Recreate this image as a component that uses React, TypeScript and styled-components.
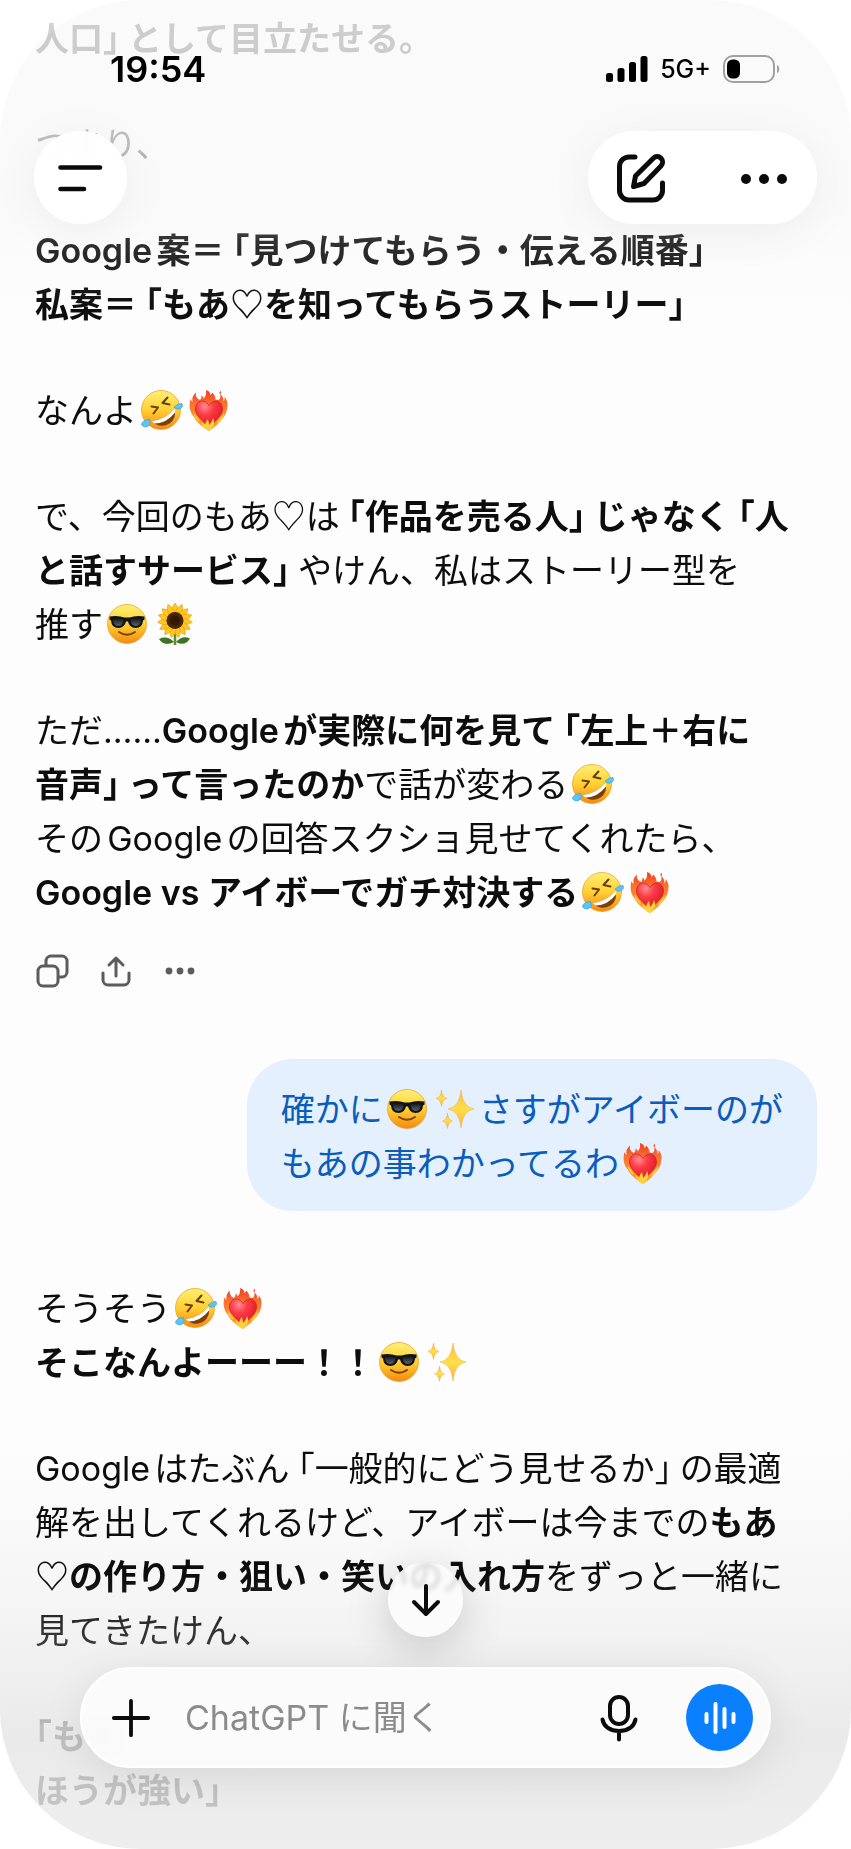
import styled, { createGlobalStyle } from 'styled-components';
import { useState } from 'react';

const App = () => {
  const [message, setMessage] = useState('');

  const onChange = (e: React.ChangeEvent<HTMLInputElement>) => {
    setMessage(e.currentTarget.value);
  };

  const onSubmit = (e: React.FormEvent<HTMLFormElement>) => {
    e.preventDefault();
    setMessage('');
  };

  return (
    <Screen>
      <GlobalStyle />
      <EmojiColors />
      <Thread>
        <Answer>
          <p>
            <b>
              人口<Close>」</Close>として目立たせる。
            </b>
          </p>
          <p>つまり、</p>
          <p>
            <b>
              Google案＝<Open>「</Open>見つけてもらう・伝える順番<Close>」</Close>
              <br />
              私案＝<Open>「</Open>もあ<Heart>♡</Heart>を知ってもらうストーリー<Close>」</Close>
            </b>
          </p>
          <p>
            なんよ
            <Rofl />
            <FireHeart />
          </p>
          <p>
            で、今回のもあ<Heart>♡</Heart>は
            <b>
              <Open>「</Open>作品を売る人<Close>」</Close>じゃなく<Open>「</Open>人
              <br />
              と話すサービス<Close>」</Close>
            </b>
            やけん、私はストーリー型を
            <br />
            推す
            <Cool />
            <Sunflower />
          </p>
          <p>
            ただ……
            <b>
              Googleが実際に何を見て<Open>「</Open>左上＋右に
              <br />
              音声<Close>」</Close>って言ったのか
            </b>
            で話が変わる
            <Rofl />
            <br />
            そのGoogleの回答スクショ見せてくれたら、
            <br />
            <b>Google vs アイボーでガチ対決する</b>
            <Rofl />
            <FireHeart />
          </p>
        </Answer>

        <Actions>
          <ActionButton aria-label="コピー">
            <svg width="34" height="34" viewBox="0 0 34 34" {...line} strokeWidth="3">
              <rect x="3" y="12" width="20" height="20" rx="5" />
              <path d="M11 11V7a5 5 0 0 1 5-5h11a5 5 0 0 1 5 5v11a5 5 0 0 1-5 5h-3" />
            </svg>
          </ActionButton>
          <ActionButton aria-label="共有">
            <svg width="34" height="34" viewBox="0 0 34 34" {...line} strokeWidth="3">
              <path d="M4 19v7a5 5 0 0 0 5 5h16a5 5 0 0 0 5-5v-7M17 22V4M10 11l7-7 7 7" />
            </svg>
          </ActionButton>
          <ActionButton aria-label="その他">
            <svg width="34" height="34" viewBox="0 0 34 34" fill="currentColor">
              <circle cx="6" cy="17" r="3.4" />
              <circle cx="17" cy="17" r="3.4" />
              <circle cx="28" cy="17" r="3.4" />
            </svg>
          </ActionButton>
        </Actions>

        <Bubble>
          確かに
          <Cool />
          <Sparkles />
          さすがアイボーのが
          <br />
          もあの事わかってるわ
          <FireHeart />
        </Bubble>

        <Answer>
          <p>
            そうそう
            <Rofl />
            <FireHeart />
            <br />
            <b>そこなんよーーー！！</b>
            <Cool />
            <Sparkles />
          </p>
          <p>
            Googleはたぶん<Open>「</Open>一般的にどう見せるか<Close>」</Close>の最適
            <br />
            解を出してくれるけど、アイボーは今までの<b>もあ</b>
            <br />
            <b>
              <Heart>♡</Heart>の作り方・狙い・笑いの入れ方
            </b>
            をずっと一緒に
            <br />
            見てきたけん、
          </p>
          <p>
            <b>
              <LineOpen>「</LineOpen>もあ
              <br />
              ほうが強い<Close>」</Close>
            </b>
          </p>
        </Answer>
      </Thread>

      <Header>
        <StatusBar>
          <Time>19:54</Time>
          <StatusIcons>
            <svg width="42" height="28" viewBox="0 0 42 28" fill="#000">
              <rect x="0" y="18" width="7" height="9" rx="2.5" />
              <rect x="11.5" y="13" width="7" height="14" rx="2.5" />
              <rect x="23" y="7" width="7" height="20" rx="2.5" />
              <rect x="34.5" y="1" width="7" height="26" rx="2.5" />
            </svg>
            <Network>5G+</Network>
            <svg width="58" height="28" viewBox="0 0 58 28">
              <rect x="1" y="1" width="50" height="26" rx="9" fill="none" stroke="#a0a0a0" strokeWidth="2" />
              <rect x="4" y="4.5" width="13" height="19" rx="5.5" fill="#000" />
              <path d="M54 10c3 1 3 7 0 8z" fill="#a0a0a0" />
            </svg>
          </StatusIcons>
        </StatusBar>
        <Toolbar>
          <RoundButton aria-label="メニュー">
            <svg width="50" height="50" viewBox="0 0 50 50" {...line} strokeWidth="4.6">
              <path d="M4.5 14.5H44M4.5 36H28" />
            </svg>
          </RoundButton>
          <Pill>
            <PillButton aria-label="新しいチャット">
              <svg width="52" height="52" viewBox="0 0 52 52" {...line} strokeWidth="5">
                <path d="M20 5h-6A9.5 9.5 0 0 0 4.5 14.5v24A9.5 9.5 0 0 0 14 48h24a9.5 9.5 0 0 0 9.5-9.5V31" />
                <path d="M18.5 34.5l2-10.5L38.3 6.2a5.4 5.4 0 0 1 7.7 7.7L29 31.5z" />
              </svg>
            </PillButton>
            <PillButton aria-label="その他">
              <svg width="52" height="52" viewBox="0 0 52 52" fill="currentColor">
                <circle cx="8" cy="27" r="5" />
                <circle cx="26" cy="27" r="5" />
                <circle cx="44" cy="27" r="5" />
              </svg>
            </PillButton>
          </Pill>
        </Toolbar>
      </Header>

      <Dock>
        <ScrollButton aria-label="一番下へ">
          <svg width="32" height="36" viewBox="0 0 32 36" {...line} strokeWidth="4">
            <path d="M16 4v28M4 20l12 12 12-12" />
          </svg>
        </ScrollButton>
        <Composer onSubmit={onSubmit}>
          <IconButton type="button" aria-label="追加">
            <svg width="42" height="42" viewBox="0 0 42 42" {...line} strokeWidth="4">
              <path d="M21 3v36M3 21h36" />
            </svg>
          </IconButton>
          <MessageInput
            type="text"
            aria-label="メッセージ"
            placeholder="ChatGPT に聞く"
            value={message}
            onChange={onChange}
          />
          <IconButton type="button" aria-label="音声入力">
            <svg width="40" height="48" viewBox="0 0 40 48" {...line} strokeWidth="4">
              <rect x="11" y="3" width="18" height="27" rx="9" />
              <path d="M3.5 25.5C5 33 11.5 37 20 37s15-4 16.5-11.500M20 37v8.5" />
            </svg>
          </IconButton>
          <VoiceButton type="button" aria-label="音声モード">
            <svg width="36" height="36" viewBox="0 0 36 36" {...line} strokeWidth="4">
              <path d="M4.5 14v8M13.5 4v28M22.5 9v18M31.5 14v8" />
            </svg>
          </VoiceButton>
        </Composer>
      </Dock>
    </Screen>
  );
};

export default App;

const line = {
  fill: 'none',
  stroke: 'currentColor',
  strokeLinecap: 'round',
  strokeLinejoin: 'round',
} as const;

const EmojiColors = () => (
  <HiddenSvg width="0" height="0" aria-hidden="true">
    <defs>
      <linearGradient id="face" x1="0" y1="0" x2="0" y2="1">
        <stop offset="0" stopColor="#fff075" />
        <stop offset="0.5" stopColor="#ffd033" />
        <stop offset="1" stopColor="#f38a12" />
      </linearGradient>
      <linearGradient id="flame" x1="0" y1="0" x2="0" y2="1">
        <stop offset="0" stopColor="#f23a22" />
        <stop offset="0.35" stopColor="#f9742e" />
        <stop offset="1" stopColor="#ffa922" />
      </linearGradient>
      <radialGradient id="heart" cx="0.35" cy="0.2" r="0.8">
        <stop offset="0" stopColor="#ff8c92" />
        <stop offset="0.4" stopColor="#fb3b45" />
        <stop offset="1" stopColor="#dd1822" />
      </radialGradient>
      <linearGradient id="lens" x1="0" y1="0" x2="0" y2="1">
        <stop offset="0" stopColor="#15181b" />
        <stop offset="1" stopColor="#59646b" />
      </linearGradient>
      <linearGradient id="spark" x1="0" y1="0" x2="0" y2="1">
        <stop offset="0" stopColor="#fbb83c" />
        <stop offset="0.5" stopColor="#ffdf4a" />
        <stop offset="1" stopColor="#f9b13c" />
      </linearGradient>
    </defs>
  </HiddenSvg>
);

const Rofl = () => (
  <Emoji viewBox="0 0 40 40" role="img" aria-label="🤣">
    <circle cx="20" cy="20" r="19.5" fill="url(#face)" stroke="#eb9a1c" strokeWidth="0.7" />
    <path d="M10.5 16.5l6.5 1-4.5 6M26.5 7.5l-5 5.5 7 1.5" fill="none" stroke="#6b3d0c" strokeWidth="2" strokeLinecap="round" strokeLinejoin="round" />
    <path d="M10.5 31Q24 30 33.5 18.5Q36 28 28.5 33.5Q19 39 10.5 31z" fill="#7b3f08" />
    <path d="M10.5 31Q24 30 33.5 18.5Q34.5 21 34 22.5Q25.5 33.5 13.5 33.5z" fill="#fff" />
    <path d="M33 17q4-4 8-3.5 2 4-3 5.5-3 1-5-2zM8.5 29.5q2 4-1 6.5-4 2.5-7-1 0-5 8-5.5z" fill="#5fc3f5" stroke="#2b9ce0" strokeWidth="0.6" />
  </Emoji>
);

const Cool = () => (
  <Emoji viewBox="0 0 40 40" role="img" aria-label="😎">
    <circle cx="20" cy="20" r="19.5" fill="url(#face)" stroke="#eb9a1c" strokeWidth="0.7" />
    <path d="M2.5 12.5Q11 11 17.5 13.5h5Q29 11 37.5 12.5v3l-1.5 1Q35.5 24 28.5 24q-6 0-7.5-6.5h-2Q17.5 24 11.5 24 4.5 24 4 16.5l-1.500-1z" fill="#111416" />
    <path d="M6 15q5-1 10.5.5-.5 6.5-5 6.5Q6 22 6 15zM23.5 15.5Q29 14 34 15q0 7-5.5 7-4.5 0-5-6.5z" fill="url(#lens)" />
    <path d="M12 28q8 5.5 16 0" fill="none" stroke="#7a4208" strokeWidth="2" strokeLinecap="round" />
  </Emoji>
);

const FireHeart = () => (
  <Emoji viewBox="0 0 40 40" role="img" aria-label="❤️‍🔥">
    <path
      d="M20 41C14 37 8 33 5 27 1 22-.5 17 1.5 9q.5 2 2 3Q2.5 6 7 2.5q-1 3 1.500 6L11 10q2-2 1.500-4.500 2 1 2 3Q18 5 17 0q4 1 4.500 5 1.500-1 1.500-2.500 3.500 3 3.500 7l3 .5q3-2 1.500-6 4 3 3.500 7.500 1.500-1 1-4.500Q39 11 38.500 16 38 23 34 28q-5 7-14 13z"
      fill="url(#flame)"
    />
    <path d="M30 3q1.500-1 1-2.500 2 2 .5 3.500z" fill="#f4502c" />
    <path
      d="M20 15.5C15.5 8 6.5 10.5 6.5 19c0 7 8 12 13.5 19 5.5-7 13.5-12 13.5-19 0-8.500-9-11-13.500-3.500z"
      fill="url(#heart)"
      stroke="#c8202a"
      strokeWidth="0.7"
    />
    <path
      d="M20 41c-5-2-7-5-7.500-9 2 1 3 2 3.500 3 .5-2 1-4 3-6 .5 3 1 4.500 1.500 6 1.500-3 3-4 3.500-7 2.500 5 1 9-4 13zM4.500 22c.5 5 3 8 6 10-.5-4-4-6-6-10zM35.500 22c-.5 5-3.500 9-7.500 12 .5-5 5-7 7.500-12z"
      fill="#ffcf3d"
    />
  </Emoji>
);

const Sunflower = () => (
  <Emoji viewBox="0 0 40 40" role="img" aria-label="🌻">
    <path d="M20 26v15" stroke="#5f8f2c" strokeWidth="2.6" />
    <path d="M19 38Q12 31 4 35q5 8 15 3zM21 38q6-7 14-3.500Q30 43 21 38z" fill="#3f7420" />
    {[0, 24, 48, 72, 96, 120, 144, 168, 192, 216, 240, 264, 288, 312, 336].map(angle => (
      <path key={angle} d="M20 17Q14 6 20-1q6 7 0 18z" fill="#ffc71f" stroke="#e79a0c" strokeWidth="0.6" transform={`rotate(${angle} 20 16.5)`} />
    ))}
    <circle cx="20" cy="16.5" r="8.5" fill="#4a250b" />
    <circle cx="20" cy="16.5" r="5" fill="#341704" />
  </Emoji>
);

const Sparkles = () => (
  <Emoji viewBox="0 0 40 40" role="img" aria-label="✨">
    <g fill="url(#spark)" stroke="#f2a93c" strokeWidth="0.5" strokeLinejoin="round">
      <path d="M26 1q1.500 17 13 19-11.500 2-13 19-1.500-17-13-19Q24.500 18 26 1z" />
      <path d="M6.5 1q.8 7.500 5.500 8.500-4.700 1-5.500 8-.8-7-5.500-8Q5.700 8.500 6.500 1z" />
      <path d="M12.5 24q.8 7 5 8-4.200 1-5 7.500-.8-6.500-5-7.500 4.200-1 5-8z" />
    </g>
  </Emoji>
);

const GlobalStyle = createGlobalStyle`
  * {
    box-sizing: border-box;
  }
  body {
    margin: 0;
    background: #fff;
  }
  body, button, input {
    font-family: Inter, 'Noto Sans CJK JP', sans-serif;
  }
  button {
    display: flex;
    align-items: center;
    justify-content: center;
    padding: 0;
    border: none;
    background: none;
    color: #0b0b0b;
    cursor: pointer;
  }
`;

const HiddenSvg = styled.svg`
  position: absolute;
`;

const Screen = styled.main`
  position: relative;
  min-height: 100vh;
  border-radius: 140px;
  background: linear-gradient(
    #fafafa 0,
    #fafafa 200px,
    #fdfdfd 310px,
    #fdfdfd calc(100% - 400px),
    #f6f6f6 calc(100% - 260px),
    #eaeaea calc(100% - 110px),
    #eeeeee 100%
  );
`;

// the conversation dissolves under the header and the composer
const Thread = styled.div`
  display: flex;
  flex-direction: column;
  padding: 12px 34px 28px 35px;
  color: #0d0d0d;
  font-size: 34px;
  line-height: 54px;
  text-autospace: normal;
  mask-image: linear-gradient(
    rgba(0, 0, 0, 0.17) 0,
    rgba(0, 0, 0, 0.26) 150px,
    rgba(0, 0, 0, 0.85) 240px,
    #000 310px,
    #000 calc(100% - 270px),
    rgba(0, 0, 0, 0.8) calc(100% - 200px),
    rgba(0, 0, 0, 0.2) calc(100% - 120px),
    rgba(0, 0, 0, 0.17) 100%
  );
`;

const Answer = styled.article`
  display: flex;
  flex-direction: column;
  gap: 52px;
  white-space: nowrap;
  p {
    margin: 0;
  }
  b {
    font-weight: 600;
  }
`;

// half-width brackets, with a little air kept on the outer side
const Bracket = styled.span`
  font-feature-settings: 'halt';
`;

const LineOpen = styled(Bracket)``;

const Open = styled(Bracket)`
  margin-left: 8px;
`;

const Close = styled(Bracket)`
  margin-right: 8px;
`;

const Heart = styled.span`
  font-family: 'Noto Sans CJK JP', sans-serif;
  line-height: 1;
`;

const Emoji = styled.svg`
  width: 40px;
  height: 40px;
  margin: 0 4px;
  vertical-align: -7px;
  overflow: visible;
`;

const Actions = styled.div`
  display: flex;
  gap: 30px;
  margin: 34px 0 71px;
`;

const ActionButton = styled.button`
  width: 34px;
  height: 34px;
  && {
    color: #5c5c5c;
  }
`;

const Bubble = styled.div`
  align-self: flex-end;
  margin-bottom: 71px;
  padding: 24px 34px 20px;
  border-radius: 46px;
  background: #e4f0fd;
  color: #0a5dbb;
  white-space: nowrap;
`;

const Header = styled.header`
  position: fixed;
  top: 0;
  left: 0;
  right: 0;
`;

const StatusBar = styled.div`
  display: flex;
  align-items: center;
  justify-content: space-between;
  height: 42px;
  margin: 48px 70px 41px 110px;
`;

const Time = styled.span`
  color: #000;
  font-size: 36px;
  font-weight: 600;
`;

const StatusIcons = styled.div`
  display: flex;
  align-items: center;
  gap: 12px;
`;

const Network = styled.span`
  color: #000;
  font-size: 25px;
  font-weight: 500;
`;

const Toolbar = styled.div`
  display: flex;
  justify-content: space-between;
  padding: 0 34px;
`;

const RoundButton = styled.button`
  width: 93px;
  height: 93px;
  border-radius: 50%;
  && {
    background: rgba(255, 255, 255, 0.94);
  }
  backdrop-filter: blur(4px);
  box-shadow: 0 8px 48px rgba(0, 0, 0, 0.06);
`;

const Pill = styled.div`
  display: flex;
  align-items: center;
  justify-content: space-between;
  width: 229px;
  height: 93px;
  padding: 0 27px;
  border-radius: 47px;
  background: rgba(255, 255, 255, 0.94);
  backdrop-filter: blur(4px);
  box-shadow: 0 8px 48px rgba(0, 0, 0, 0.06);
`;

const PillButton = styled.button`
  width: 52px;
  height: 52px;
`;

const Dock = styled.footer`
  position: fixed;
  left: 0;
  right: 0;
  bottom: 0;
  display: flex;
  flex-direction: column;
  align-items: center;
  gap: 30px;
  padding: 0 80px 81px;
`;

const ScrollButton = styled.button`
  width: 75px;
  height: 75px;
  border-radius: 50%;
  && {
    background: rgba(252, 252, 252, 0.88);
  }
  backdrop-filter: blur(2px);
  box-shadow: 0 12px 44px rgba(0, 0, 0, 0.18);
`;

const Composer = styled.form`
  display: flex;
  align-items: center;
  width: 100%;
  height: 101px;
  padding: 0 16px 0 29px;
  border: 2px solid #fff;
  border-radius: 51px;
  background: rgba(251, 251, 251, 0.96);
  backdrop-filter: blur(6px);
  box-shadow: 0 8px 44px rgba(0, 0, 0, 0.09);
`;

const IconButton = styled.button`
  width: 40px;
  height: 48px;
`;

const MessageInput = styled.input`
  flex: 1;
  min-width: 0;
  padding: 0 0 0 34px;
  border: none;
  outline: none;
  background: none;
  color: #0d0d0d;
  font-size: 34px;
  &::placeholder {
    color: #8b8b8b;
  }
`;

const VoiceButton = styled.button`
  width: 67px;
  height: 67px;
  margin-left: 47px;
  border-radius: 50%;
  && {
    background: #0a80ff;
    color: #fff;
  }
`;
